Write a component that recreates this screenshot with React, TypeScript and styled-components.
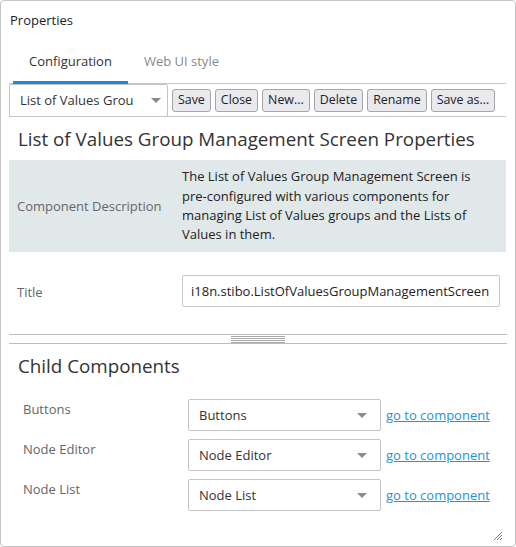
import React from 'react'
import styled, { createGlobalStyle } from 'styled-components'

const GlobalStyle = createGlobalStyle`
  html, body {
    margin: 0;
    padding: 0;
    background: #fff;
  }
  body {
    font-family: 'Open Sans', 'Noto Sans', sans-serif;
    color: #333;
  }
  * { box-sizing: border-box; }
`

const Panel = styled.div`
  position: relative;
  width: 516px;
  height: 547px;
  border: 1px solid #c4c4c4;
  border-radius: 4px;
  padding: 0 9px 0 8px;
  background: #fff;
`

const PanelTitle = styled.div`
  font-size: 13px;
  height: 38px;
  line-height: 38px;
  padding-left: 1px;
  color: #222;
`

const TabBar = styled.div`
  display: flex;
  padding-left: 4px;
  border-bottom: 1px solid #c8c8c8;
  height: 45px;
`

const Tab = styled.div<{ $active?: boolean }>`
  font-size: 13px;
  padding: 0 16px;
  line-height: 44px;
  color: ${p => (p.$active ? '#333' : '#888')};
  border-bottom: ${p => (p.$active ? '3px solid #1a8bd0' : '3px solid transparent')};
  margin-bottom: -1px;
`

const Toolbar = styled.div`
  display: flex;
  align-items: center;
  gap: 4px;
  height: 33px;
  border-bottom: 1px solid #c8c8c8;
`

const SelectBox = styled.div<{ $width: number; $height: number }>`
  position: relative;
  width: ${p => p.$width}px;
  height: ${p => p.$height}px;
  border: 1px solid #c4c4c4;
  border-radius: 2px;
  background: #fff;
  font-size: 13px;
  line-height: ${p => p.$height - 2}px;
  padding-left: 10px;
  color: #333;
  flex: none;
  white-space: nowrap;
  overflow: hidden;
`

const Caret = styled.span<{ $right: number }>`
  position: absolute;
  right: ${p => p.$right}px;
  top: 50%;
  margin-top: -2px;
  width: 0;
  height: 0;
  border-left: 5px solid transparent;
  border-right: 5px solid transparent;
  border-top: 5px solid #8a8a8a;
`

const ToolButton = styled.button`
  height: 23px;
  padding: 0 5px;
  font-family: inherit;
  font-size: 12.4px;
  color: #222;
  background: #e9e9ee;
  border: 1px solid #a6a6a6;
  border-radius: 3px;
  line-height: 20px;
  white-space: nowrap;
  flex: none;
`

const Heading = styled.h2`
  margin: 0;
  font-weight: 400;
  font-size: 18.8px;
  color: #333;
  padding-left: 9px;
  height: 43px;
  line-height: 45px;
  white-space: nowrap;
`

const DescBlock = styled.div`
  display: grid;
  grid-template-columns: 173px 1fr;
  align-items: center;
  background: #e1e8ea;
  height: 92px;
  font-size: 13px;
`

const FieldLabel = styled.div<{ $indent?: number }>`
  font-size: 13px;
  color: #666;
  padding-left: ${p => p.$indent ?? 8}px;
`

const DescText = styled.div`
  line-height: 19.4px;
  color: #222;
  padding-right: 8px;
`

const FieldRow = styled.div`
  display: grid;
  grid-template-columns: 173px 1fr;
  align-items: center;
  height: 82px;
  padding-bottom: 5px;
`

const TitleLabel = styled(FieldLabel)`
  padding-top: 3px;
`

const TextInput = styled.div`
  height: 32px;
  width: 318px;
  border: 1px solid #c8c8c8;
  border-radius: 2px;
  font-size: 13px;
  line-height: 30px;
  padding-left: 8px;
  color: #222;
  white-space: nowrap;
  overflow: hidden;
`

const Splitter = styled.div`
  height: 10px;
  border-top: 1px solid #bdbdbd;
  border-bottom: 1px solid #bdbdbd;
  display: flex;
  justify-content: center;
  align-items: center;
  margin-right: -1px;
`

const Grip = styled.div`
  width: 54px;
  height: 7px;
  background: repeating-linear-gradient(
    to bottom,
    #a8a8a8 0px,
    #a8a8a8 1px,
    transparent 1px,
    transparent 2px
  );
`

const ChildList = styled.div`
  display: flex;
  flex-direction: column;
  gap: 8px;
  margin-top: 12px;
`

const ChildRow = styled.div`
  display: grid;
  grid-template-columns: 179px 193px auto;
  align-items: start;
  height: 32px;
`

const ChildLabel = styled(FieldLabel)`
  line-height: 18px;
  padding-top: 1px;
`

const GoLink = styled.a`
  font-size: 13px;
  color: #1a96d8;
  text-decoration: underline;
  line-height: 32px;
  padding-left: 5px;
  white-space: nowrap;
  cursor: pointer;
`

const ResizeGrip = styled.svg`
  position: absolute;
  right: 12px;
  bottom: 5px;
`

const children = ['Buttons', 'Node Editor', 'Node List']
const buttons = ['Save', 'Close', 'New...', 'Delete', 'Rename', 'Save as...']

export default function App() {
  return (
    <>
      <GlobalStyle />
      <Panel>
        <PanelTitle>Properties</PanelTitle>
        <TabBar>
          <Tab $active>Configuration</Tab>
          <Tab>Web UI style</Tab>
        </TabBar>
        <Toolbar>
          <SelectBox $width={159} $height={33}>
            List of Values Grou
            <Caret $right={6} />
          </SelectBox>
          {buttons.map(b => (
            <ToolButton key={b}>{b}</ToolButton>
          ))}
        </Toolbar>
        <Heading>List of Values Group Management Screen Properties</Heading>
        <DescBlock>
          <FieldLabel>Component Description</FieldLabel>
          <DescText>
            The List of Values Group Management Screen is pre-configured with various components for
            managing List of Values groups and the Lists of Values in them.
          </DescText>
        </DescBlock>
        <FieldRow>
          <TitleLabel>Title</TitleLabel>
          <TextInput>i18n.stibo.ListOfValuesGroupManagementScreen</TextInput>
        </FieldRow>
        <Splitter>
          <Grip />
        </Splitter>
        <Heading>Child Components</Heading>
        <ChildList>
          {children.map(c => (
            <ChildRow key={c}>
              <ChildLabel $indent={14}>{c}</ChildLabel>
              <SelectBox $width={193} $height={32}>
                {c}
                <Caret $right={13} />
              </SelectBox>
              <GoLink>go to component</GoLink>
            </ChildRow>
          ))}
        </ChildList>
        <ResizeGrip width="10" height="10" viewBox="0 0 10 10">
          <path d="M9 1 L1 9 M9 4 L4 9 M9 7 L7 9" stroke="#777" strokeWidth="1" fill="none" />
        </ResizeGrip>
      </Panel>
    </>
  )
}
